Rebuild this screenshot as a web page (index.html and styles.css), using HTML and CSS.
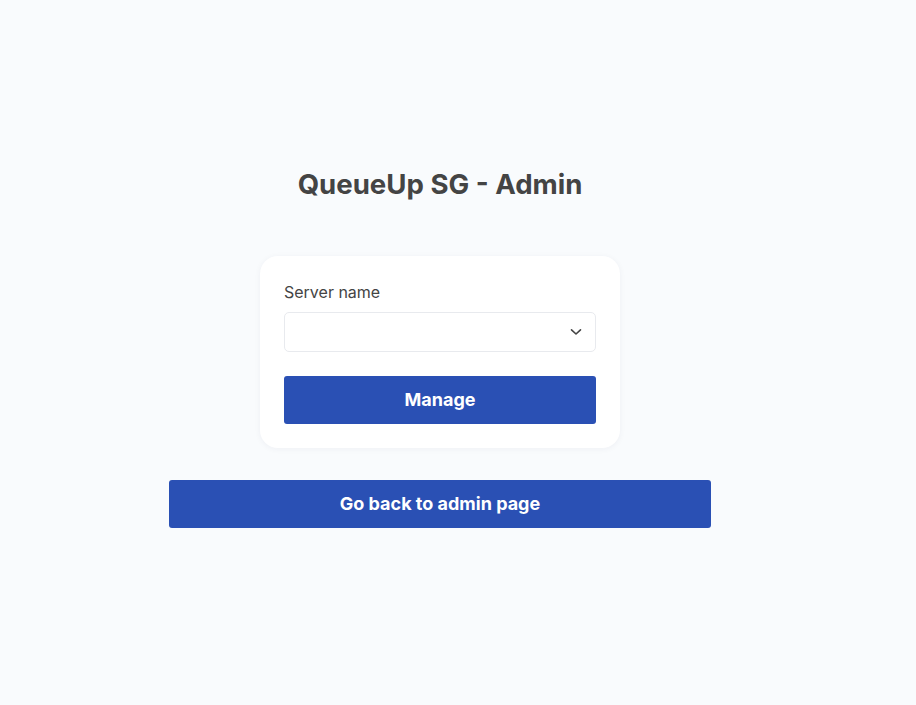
FILE: index.html
```html
<!DOCTYPE html>
<html lang="en">
<head>
<meta charset="utf-8">
<title>QueueUp SG - Admin</title>
<link rel="stylesheet" href="styles.css">
</head>
<body>
<main class="page">
  <h1 class="title">QueueUp SG - Admin</h1>
  <form class="card">
    <label class="label" for="server">Server name</label>
    <div class="select-wrap">
      <select id="server" class="select"><option value=""></option></select>
      <svg class="chevron" width="12" height="8" viewBox="0 0 12 8"><path d="M1.5 1.8 L6 6 L10.5 1.8" fill="none" stroke="#444" stroke-width="1.6" stroke-linecap="round" stroke-linejoin="round"/></svg>
    </div>
    <button type="button" class="btn">Manage</button>
  </form>
  <button type="button" class="btn btn-wide">Go back to admin page</button>
</main>
</body>
</html>
```
FILE: styles.css
```css
* { box-sizing: border-box; }
html, body { margin: 0; padding: 0; }
body {
  background: #f9fbfd;
  font-family: Inter, "Noto Sans", sans-serif;
  color: #444;
  min-height: 705px;
}
.page {
  width: 880px;
  display: flex;
  flex-direction: column;
  align-items: center;
  padding-top: 167px;
}
.title {
  margin: 0;
  font-size: 27.6px;
  line-height: 34px;
  font-weight: 700;
  color: #444;
}
.card {
  margin-top: 55px;
  width: 360px;
  background: #fff;
  border-radius: 18px;
  padding: 24px;
  display: flex;
  flex-direction: column;
  box-shadow: 0 1px 6px rgba(30, 40, 80, 0.05);
}
.label {
  font-size: 16px;
  line-height: 24px;
  color: #444;
}
.select-wrap {
  position: relative;
  margin-top: 8px;
}
.select {
  appearance: none;
  -webkit-appearance: none;
  display: block;
  width: 100%;
  height: 40px;
  border: 1px solid #e8eaee;
  border-radius: 5px;
  background: #fff;
  font: inherit;
}
.chevron {
  position: absolute;
  right: 14px;
  top: 16px;
  pointer-events: none;
}
.btn {
  margin-top: 24px;
  height: 48px;
  width: 100%;
  border: none;
  border-radius: 3px;
  background: #2a50b4;
  color: #fff;
  font-family: Inter, "Noto Sans", sans-serif;
  font-size: 18px;
  font-weight: 700;
  line-height: 47px;
  padding: 0 0 1px;
}
.btn-wide {
  margin-top: 32px;
  width: 542px;
}
```
